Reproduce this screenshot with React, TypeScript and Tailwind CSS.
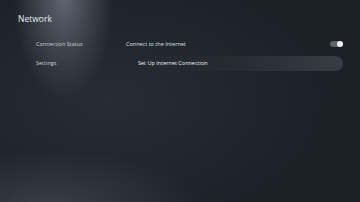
const App = () => {
  return (
    <div
      className="relative w-[360px] h-[202px] overflow-hidden bg-[#1c2128] text-[#e4e6ea]"
      style={{ fontFamily: '"Open Sans", "Liberation Sans", sans-serif' }}
    >
      <div className="absolute inset-0 bg-[radial-gradient(ellipse_50px_100px_at_64px_0px,rgba(165,170,185,0.5),transparent)]" />
      <div className="absolute inset-0 bg-[radial-gradient(ellipse_150px_55px_at_50px_205px,rgba(115,120,135,0.32),transparent)]" />
      <div className="absolute inset-0 bg-[radial-gradient(ellipse_220px_130px_at_110px_100px,rgba(60,66,76,0.35),transparent)]" />

      <div className="relative flex flex-col">
        <h1 className="pl-[18px] pt-[13px] text-[8.5px] leading-[12px] text-[#e8eaee]">Network</h1>

        <div className="mt-[13px] flex flex-col">
          <div className="flex items-center h-[12px]">
            <span className="w-[126px] pl-[36px] shrink-0 whitespace-nowrap text-[5.5px] text-[#c9ccd2]">Connection Status</span>
            <span className="flex-1 whitespace-nowrap text-[5.5px] text-[#dfe1e5]">Connect to the Internet</span>
            <div className="mr-[17px] w-[13px] h-[6px] rounded-full bg-[#5d6168] flex items-center justify-end">
              <div className="w-[6px] h-[6px] rounded-full bg-[#eceef1]" />
            </div>
          </div>

          <div className="mt-[6px] flex items-center h-[15px]">
            <span className="w-[120px] pl-[36px] shrink-0 text-[5.5px] text-[#c9ccd2]">Settings</span>
            <div className="flex-1 mr-[17px] h-[15px] rounded-r-full bg-gradient-to-r from-transparent via-[#262b32] to-[#383d45] flex items-center">
              <span className="pl-[18px] whitespace-nowrap text-[5.5px] text-[#eef0f2]">Set Up Internet Connection</span>
            </div>
          </div>
        </div>
      </div>
    </div>
  );
};

export default App;
